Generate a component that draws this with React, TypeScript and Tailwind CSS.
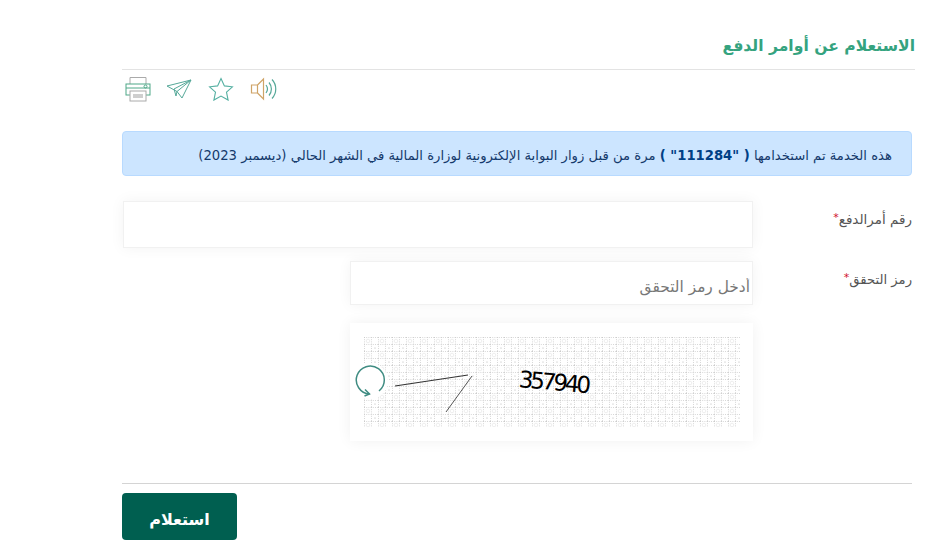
const font = "font-['DejaVu_Sans',sans-serif]";

function SpeakerIcon() {
  return (
    <svg width="28" height="24" viewBox="0 0 28 24" fill="none" strokeWidth="1.200">
      <path d="M1.500 8h6v8h-6z M7.500 8 L13.500 2 V22 L7.500 16" stroke="#cfa468" />
      <path d="M16 8c1.800 2.400 1.800 5.600 0 8 M19 5.500c3.200 3.800 3.200 9.200 0 13 M22 2.500c5 5.400 5 13.600 0 19" stroke="#55a898" />
    </svg>
  );
}

function StarIcon() {
  return (
    <svg width="26" height="24" viewBox="0 0 26 24" fill="none" stroke="#55b0a2" strokeWidth="1.100">
      <path d="M13 1.500l3.400 7.400 8 .9-5.900 5.400 1.600 7.900-7.100-4-7.100 4 1.600-7.900L1.600 9.800l8-.9z" />
    </svg>
  );
}

function SendIcon() {
  return (
    <svg width="26" height="22" viewBox="0 0 26 22" fill="none" stroke="#55a898" strokeWidth="1">
      <path d="M1 8l24-6-9 18-5-6.500z M25 2L8 11l2 7 1-4.500z" />
    </svg>
  );
}

function PrintIcon() {
  return (
    <svg width="26" height="26" viewBox="0 0 26 26" fill="none" strokeWidth="1">
      <path d="M5 8V1.500h16V8" stroke="#aaa" />
      <rect x="1" y="8" width="24" height="11" stroke="#4fa888" />
      <path d="M1 12h24" stroke="#4fa888" />
      <circle cx="20.500" cy="10.500" r="1.500" stroke="#4fa888" />
      <rect x="5" y="15" width="16" height="10" fill="#fff" stroke="#aaa" />
      <rect x="8" y="18" width="10" height="4" fill="#cfcfcf" />
    </svg>
  );
}

function CaptchaBox() {
  return (
    <div className="relative h-[118px] w-[403px] bg-white pt-[14px] shadow-[0_0_14px_rgba(0,0,0,0.06)]" dir="ltr">
      <div className="ml-[14px] h-[90px] w-[376px]">
        <svg width="376" height="90" viewBox="0 0 376 90">
          <defs>
            <pattern id="dots" width="14" height="14" patternUnits="userSpaceOnUse">
              <rect width="14" height="14" fill="#fff" />
              <path d="M0 .5h14M.5 0v14M0 7.500h14M7.500 0v14" stroke="#c6c6c6" strokeWidth="0.700" strokeDasharray="1 1.200" />
              <circle cx="4" cy="4" r="1.800" fill="none" stroke="#dcdcdc" strokeWidth="0.500" />
              <circle cx="11" cy="11" r="0.600" fill="#b4b4b4" />
            </pattern>
          </defs>
          <rect width="376" height="90" fill="url(#dots)" />
          <path d="M31 49L104 38" stroke="#333" strokeWidth="1.100" />
          <path d="M82 75L108 39" stroke="#555" strokeWidth="1" />
        </svg>
      </div>
      <span className="absolute left-[169px] top-[45px] origin-left rotate-[5deg] text-[23px] leading-none tracking-[-3.100px] text-black font-['DejaVu_Sans',sans-serif]">
        357940
      </span>
      <div className="absolute left-[2px] top-[40px] flex h-[36px] w-[36px] items-center justify-center rounded-full bg-white">
        <svg width="32" height="34" viewBox="0 0 32 34" fill="none" stroke="#3f8c82" strokeWidth="1.500">
          <path d="M25 27A14 14 0 1 0 15.500 30" />
          <path d="M11 25.500l4.500 4.500-5 2" />
        </svg>
      </div>
    </div>
  );
}

export default function App() {
  return (
    <div dir="rtl" className={`min-h-[559px] bg-white ${font}`}>
      <div className="ml-[122px] mr-[23px] pt-[34px]">
        {/* Title */}
        <h1 className="-mr-[3px] h-[36px] border-b border-[#e3e3e3] text-[15.600px] font-bold leading-[24px] text-[#35a37f]">
          <span className="block">الاستعلام عن أوامر الدفع</span>
        </h1>

        {/* Toolbar */}
        <div className="flex h-[40px] items-start justify-end pt-[6px]">
          <div className="flex flex-row-reverse items-center gap-[15px] pl-[3px]">
            <PrintIcon />
            <SendIcon />
            <div className="ml-[1px]">
              <StarIcon />
            </div>
            <div className="ml-[1px]">
              <SpeakerIcon />
            </div>
          </div>
        </div>

        {/* Notice */}
        <div className="mt-[21px] flex h-[45px] items-center rounded-[4px] border border-[#b8daff] bg-[#cce5ff] pr-[19px] pt-[4px] text-[13.200px] text-[#14396b]">
          <span>
            هذه الخدمة تم استخدامها <strong className="text-[#004085]">( "111284" )</strong> مرة من قبل زوار البوابة الإلكترونية لوزارة المالية في الشهر الحالي (ديسمبر 2023)
          </span>
        </div>

        {/* Form */}
        <div className="mt-[25px] flex items-start justify-between">
          <label className="pt-[8px] text-[13.500px] leading-[18px] text-[#555]">
            رقم أمرالدفع<span className="align-[3px] text-[11px] text-[#d0102c]">*</span>
          </label>
          <input className="ml-[1px] h-[47px] w-[630px] border border-[#f1f1f1] bg-white shadow-[0_0_14px_rgba(0,0,0,0.05)]" />
        </div>

        <div className="mt-[13px] flex items-start justify-between">
          <label className="pt-[8px] text-[13.200px] leading-[18px] text-[#555]">
            رمز التحقق<span className="align-[3px] text-[11px] text-[#d0102c]">*</span>
          </label>
          <div className="ml-[228px] flex w-[403px] flex-col gap-[18px]">
            <input
              placeholder="أدخل رمز التحقق"
              className="h-[44px] w-full border border-[#f1f1f1] bg-white px-[2px] pt-[8px] text-[15.400px] shadow-[0_0_14px_rgba(0,0,0,0.05)] placeholder:text-[#777]"
            />
            <CaptchaBox />
          </div>
        </div>

        <div className="mt-[42px] border-t border-[#d4d4d4] pt-[9px]">
          <button className="mr-auto block h-[47px] w-[115px] rounded-[4px] bg-[#005f50] pt-[6px] text-[16px] font-bold text-white">
            استعلام
          </button>
        </div>
      </div>
    </div>
  );
}
